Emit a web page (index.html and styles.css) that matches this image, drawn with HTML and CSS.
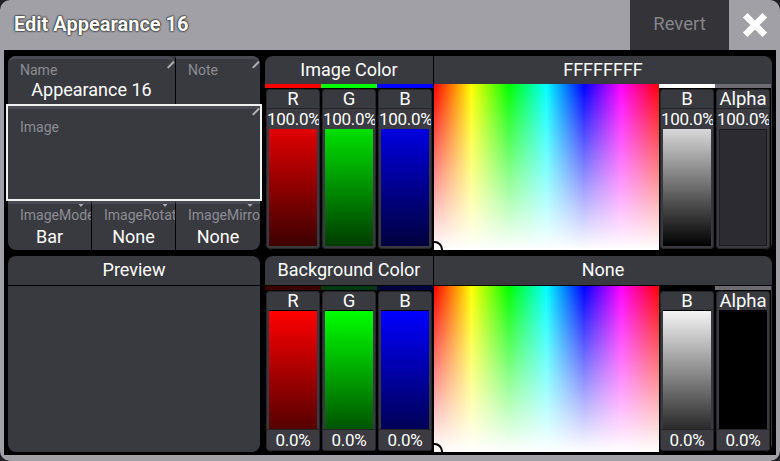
FILE: index.html
```html
<!DOCTYPE html>
<html lang="en">
<head>
<meta charset="UTF-8">
<title>Edit Appearance 16</title>
<link rel="stylesheet" href="styles.css">
</head>
<body>

<div class="window">
  <div class="titlebar">
    <div class="title">Edit Appearance 16</div>
    <div class="revert">Revert</div>
    <div class="close">
      <svg width="26" height="26" viewBox="0 0 26 26">
        <path d="M5.5 5.5 L20.5 20.5 M20.5 5.5 L5.5 20.5" stroke="#fff" stroke-width="6.5" stroke-linecap="square"/>
      </svg>
    </div>
  </div>

  <div class="content">
    <!-- appearance properties -->
    <div class="panel props">
      <div class="row names">
        <div class="cell name-cell">
          <span class="label">Name</span>
          <span class="value">Appearance 16</span>
          <i class="pencil"></i>
        </div>
        <div class="cell note-cell">
          <span class="label">Note</span>
          <i class="pencil"></i>
        </div>
      </div>
      <div class="cell image-cell">
        <span class="label">Image</span>
        <i class="pencil"></i>
      </div>
      <div class="row modes">
        <div class="cell">
          <span class="label">ImageMode</span>
          <span class="value">Bar</span>
          <i class="drop"></i>
        </div>
        <div class="cell">
          <span class="label">ImageRotation</span>
          <span class="value">None</span>
          <i class="drop"></i>
        </div>
        <div class="cell">
          <span class="label">ImageMirror</span>
          <span class="value">None</span>
          <i class="drop"></i>
        </div>
      </div>
    </div>

    <!-- image color -->
    <div class="panel colors">
      <div class="heads">
        <div class="head rgb-head">Image Color</div>
        <div class="head hex-head">FFFFFFFF</div>
      </div>
      <div class="faders">
        <div class="col"><div class="strip red"></div>
          <div class="fader"><div class="fname">R</div><div class="fval">100.0%</div><div class="bar bar-r"></div></div>
        </div>
        <div class="col"><div class="strip green"></div>
          <div class="fader"><div class="fname">G</div><div class="fval">100.0%</div><div class="bar bar-g"></div></div>
        </div>
        <div class="col"><div class="strip blue"></div>
          <div class="fader"><div class="fname">B</div><div class="fval">100.0%</div><div class="bar bar-b"></div></div>
        </div>
        <div class="picker"><i class="cursor"></i></div>
        <div class="col"><div class="strip white"></div>
          <div class="fader"><div class="fname">B</div><div class="fval">100.0%</div><div class="bar bar-gray"></div></div>
        </div>
        <div class="col"><div class="strip gray"></div>
          <div class="fader"><div class="fname">Alpha</div><div class="fval">100.0%</div><div class="bar bar-empty"></div></div>
        </div>
      </div>
    </div>

    <!-- preview -->
    <div class="panel preview">
      <div class="preview-head">Preview</div>
      <div class="preview-body"></div>
    </div>

    <!-- background color -->
    <div class="panel colors">
      <div class="heads">
        <div class="head rgb-head">Background Color</div>
        <div class="head hex-head">None</div>
      </div>
      <div class="faders low">
        <div class="col"><div class="strip dark-red"></div>
          <div class="fader"><div class="fname">R</div><div class="bar bar-r2"></div><div class="fval">0.0%</div></div>
        </div>
        <div class="col"><div class="strip dark-green"></div>
          <div class="fader"><div class="fname">G</div><div class="bar bar-g2"></div><div class="fval">0.0%</div></div>
        </div>
        <div class="col"><div class="strip dark-blue"></div>
          <div class="fader"><div class="fname">B</div><div class="bar bar-b2"></div><div class="fval">0.0%</div></div>
        </div>
        <div class="picker"><i class="cursor"></i></div>
        <div class="col"><div class="strip black"></div>
          <div class="fader"><div class="fname">B</div><div class="bar bar-gray2"></div><div class="fval">0.0%</div></div>
        </div>
        <div class="col"><div class="strip gray"></div>
          <div class="fader"><div class="fname">Alpha</div><div class="bar bar-black"></div><div class="fval">0.0%</div></div>
        </div>
      </div>
    </div>
  </div>
</div>

</body>
</html>
```

FILE: styles.css
```css
body {
  margin: 0;
  background-color: #202024;
  font-family: Roboto, "Liberation Sans", sans-serif;
}

.window {
  width: 780px;
  height: 461px;
  box-sizing: border-box;
  background-color: #a0a0a6;
  border-radius: 10px;
  padding: 0 4px 6px 4px;
  display: flex;
  flex-direction: column;
  overflow: hidden;
}

/* title bar */
.titlebar {
  height: 50px;
  display: flex;
  margin: 0 -4px;
}

.title {
  flex: 1;
  padding-left: 14px;
  line-height: 48px;
  font-size: 20px;
  font-weight: bold;
  color: #fff;
  text-shadow: 0 0 2px #222, 0 0 2px #222, 0 0 1px #000;
}

.revert {
  width: 99px;
  background-color: #333338;
  color: #85858a;
  font-size: 18.5px;
  line-height: 48px;
  text-align: center;
}

.close {
  width: 51px;
  display: flex;
  align-items: center;
  justify-content: center;
}

/* main area */
.content {
  flex: 1;
  background-color: #000;
  padding: 6px 4px 3px 4px;
  display: grid;
  grid-template-columns: 252px 507px;
  grid-template-rows: 194px 196px;
  column-gap: 5px;
  row-gap: 6px;
}

.panel {
  background-color: #393940;
  border-radius: 8px;
  position: relative;
}

/* properties */
.props {
  display: flex;
  flex-direction: column;
}

.row {
  display: flex;
}

.cell {
  position: relative;
  border-top: 3px solid #4a4a52;
  box-sizing: border-box;
  overflow: hidden;
  display: flex;
  flex-direction: column;
}

.names {
  height: 48px;
}

.names .cell {
  border-radius: 8px 8px 0 0;
}

.name-cell {
  width: 167px;
}

.note-cell {
  flex: 1;
  border-left: 1px solid #000;
  border-top-left-radius: 0 !important;
}

.label {
  font-size: 14px;
  line-height: 16px;
  color: #8c8c92;
  padding: 3px 0 0 12px;
  white-space: nowrap;
}

.value {
  font-size: 18px;
  line-height: 21px;
  margin-top: 1px;
  color: #fff;
  text-align: center;
  white-space: nowrap;
}

.image-cell {
  height: 97px;
  margin: 0 -2px;
  border: 2px solid #f2f2f2;
  box-shadow: inset 0 3px 0 #4a4a52;
}

.image-cell .label {
  padding-top: 13px;
}

.modes {
  flex: 1;
}

.modes .cell {
  width: 84px;
  border-left: 1px solid #000;
}

.modes .cell:first-child {
  width: 83px;
  border-left: none;
  border-bottom-left-radius: 8px;
}

.modes .cell:last-child {
  flex: 1;
  border-bottom-right-radius: 8px;
}

.modes .label {
  padding-top: 3px;
}

.modes .value {
  margin-top: 3px;
}

.pencil {
  position: absolute;
  right: 4px;
  top: 1px;
  width: 1.5px;
  height: 9px;
  background-color: #b0b0b4;
  transform: rotate(45deg);
}

.drop {
  position: absolute;
  right: 5px;
  top: -3px;
  width: 0;
  height: 0;
  border-left: 5px solid transparent;
  border-right: 5px solid transparent;
  border-top: 6px solid #a8a8ae;
}

/* color panels */
.colors {
  display: flex;
  flex-direction: column;
  overflow: hidden;
}

.heads {
  height: 28px;
  display: flex;
  color: #fff;
  font-size: 18px;
}

.head {
  line-height: 28px;
  text-align: center;
}

.rgb-head {
  width: 168px;
  border-right: 1px solid #000;
}

.hex-head {
  flex: 1;
}

.preview + .colors .heads {
  height: 29px;
  border-bottom: 1px solid #000;
}

.faders {
  flex: 1;
  display: flex;
  background-color: #393940;
}

.col {
  width: 56px;
  display: flex;
  flex-direction: column;
  background-color: #000;
}

.col:nth-child(3) {
  border-right: 1px solid #000;
}

.strip {
  height: 4px;
}

.red { background-color: #ff0000; }
.green { background-color: #00ff00; }
.blue { background-color: #0000ff; }
.white { background-color: #ffffff; }
.gray { background-color: #6c6c72; }
.black { background-color: #000; }
.dark-red { background-color: #3c0000; }
.dark-green { background-color: #003a10; }
.dark-blue { background-color: #000040; }

.fader {
  flex: 1;
  margin: 1px;
  background-color: #393940;
  border: 1px solid #25252a;
  border-radius: 3px;
  padding: 0 2px 2px 2px;
  display: flex;
  flex-direction: column;
}

.low .fader {
  padding-bottom: 0;
}

.fname {
  height: 18px;
  line-height: 18px;
  text-align: center;
  color: #fff;
  font-size: 18.5px;
}

.fval {
  height: 20px;
  line-height: 21px;
  background-color: #3b3b41;
  border-top: 1px solid #25252a;
  color: #fff;
  font-size: 17px;
  text-align: center;
  white-space: nowrap;
  overflow: hidden;
  letter-spacing: -0.3px;
  margin: 0 -2px;
}

.bar {
  flex: 1;
}

.low .bar {
  border-top: 1px solid #000;
}

.bar-r { background: linear-gradient(#e00000, #3c0000); }
.bar-g { background: linear-gradient(#00e000, #003c00); }
.bar-b { background: linear-gradient(#0000e0, #00003c); }
.bar-gray { background: linear-gradient(#d8d8d8, #000); }
.bar-empty { background-color: #2b2b31; border: 1px solid #1c1c20; }

.bar-r2 { background: linear-gradient(#ff0000, #550000); }
.bar-g2 { background: linear-gradient(#00ff00, #005500); }
.bar-b2 { background: linear-gradient(#0000ff, #000055); }
.bar-gray2 { background: linear-gradient(#f4f4f4, #2a2a2a); }
.bar-black { background-color: #000; }

.picker {
  width: 225px;
  position: relative;
  overflow: hidden;
  background:
    linear-gradient(to bottom, rgba(255, 255, 255, 0), #fff),
    linear-gradient(to right, #f00, #ff0, #0f0, #0ff, #00f, #f0f, #f00);
}

.cursor {
  position: absolute;
  left: -8px;
  bottom: -8px;
  width: 13px;
  height: 13px;
  border: 2px solid #000;
  border-radius: 50%;
}

/* preview */
.preview {
  display: flex;
  flex-direction: column;
}

.preview-head {
  height: 29px;
  line-height: 28px;
  border-bottom: 1px solid #000;
  text-align: center;
  color: #fff;
  font-size: 18px;
}

.preview-body {
  flex: 1;
}
```
